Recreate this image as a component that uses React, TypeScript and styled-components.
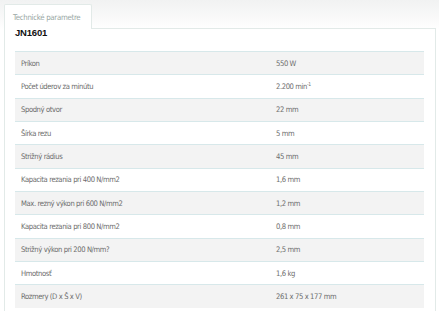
import styled, { createGlobalStyle } from 'styled-components';

const GlobalStyle = createGlobalStyle`
  html, body {
    margin: 0;
    padding: 0;
    background: #ffffff;
  }
  body {
    font-family: "DejaVu Sans Condensed", "Roboto", sans-serif;
  }
`;

const specs: Array<[string, React.ReactNode]> = [
  ['Príkon', '550 W'],
  ['Počet úderov za minútu', <>2.200 min<sup>-1</sup></>],
  ['Spodný otvor', '22 mm'],
  ['Šírka rezu', '5 mm'],
  ['Strižný rádius', '45 mm'],
  ['Kapacita rezania pri 400 N/mm2', '1,6 mm'],
  ['Max. rezný výkon pri 600 N/mm2', '1,2 mm'],
  ['Kapacita rezania pri 800 N/mm2', '0,8 mm'],
  ['Strižný výkon pri 200 N/mm?', '2,5 mm'],
  ['Hmotnosť', '1,6 kg'],
  ['Rozmery (D x Š x V)', '261 x 75 x 177 mm'],
];

const Page = styled.div`
  width: 439px;
  height: 311px;
  overflow: hidden;
  padding: 4px 3px 0 4px;
  box-sizing: border-box;
  background: linear-gradient(180deg, #f1f2f2 0px, #fbfbfb 22px, #ffffff 30px);
`;

const TabStrip = styled.div`
  display: flex;
  height: 24px;
`;

const Tab = styled.div`
  width: 88px;
  box-sizing: border-box;
  border: 1px solid #e2eae8;
  border-bottom: none;
  background: #ffffff;
  border-radius: 2px 2px 0 0;
  padding: 8px 0 0 8px;
  font-size: 7.8px;
  letter-spacing: -0.3px;
  color: #98a6a3;
  white-space: nowrap;
  position: relative;
  z-index: 1;
  margin-bottom: -1px;
`;

const Panel = styled.div`
  width: 432px;
  height: 300px;
  box-sizing: border-box;
  border: 1px solid #e2eae8;
  border-bottom: none;
  background: #ffffff;
  padding: 0 11px 0 10px;
`;

const Model = styled.h2`
  margin: 0 0 14px 0;
  font-family: "Liberation Sans", Arial, sans-serif;
  font-weight: bold;
  font-size: 9.5px;
  letter-spacing: -0.2px;
  line-height: 8px;
  color: #111111;
`;

const Table = styled.div`
  display: flex;
  flex-direction: column;
  width: 409px;
`;

const Row = styled.div<{ $odd: boolean }>`
  display: grid;
  grid-template-columns: 255px 1fr;
  height: 23.33px;
  box-sizing: border-box;
  align-items: center;
  border-top: 1px solid #d7e8ea;
  background: ${({ $odd }) => ($odd ? '#f3f3f3' : '#ffffff')};
  font-size: 7.6px;
  letter-spacing: -0.4px;
  color: #6d6d6d;
`;

const Label = styled.div`
  padding-left: 6px;
  white-space: nowrap;
`;

const Value = styled.div`
  padding-left: 6px;
  white-space: nowrap;

  sup {
    font-size: 5px;
    vertical-align: 3px;
    line-height: 0;
  }
`;

export default function App() {
  return (
    <>
      <GlobalStyle />
      <Page>
        <TabStrip>
          <Tab>Technické parametre</Tab>
        </TabStrip>
        <Panel>
          <Model>JN1601</Model>
          <Table>
            {specs.map(([label, value], i) => (
              <Row key={label} $odd={i % 2 === 0}>
                <Label>{label}</Label>
                <Value>{value}</Value>
              </Row>
            ))}
          </Table>
        </Panel>
      </Page>
    </>
  );
}
